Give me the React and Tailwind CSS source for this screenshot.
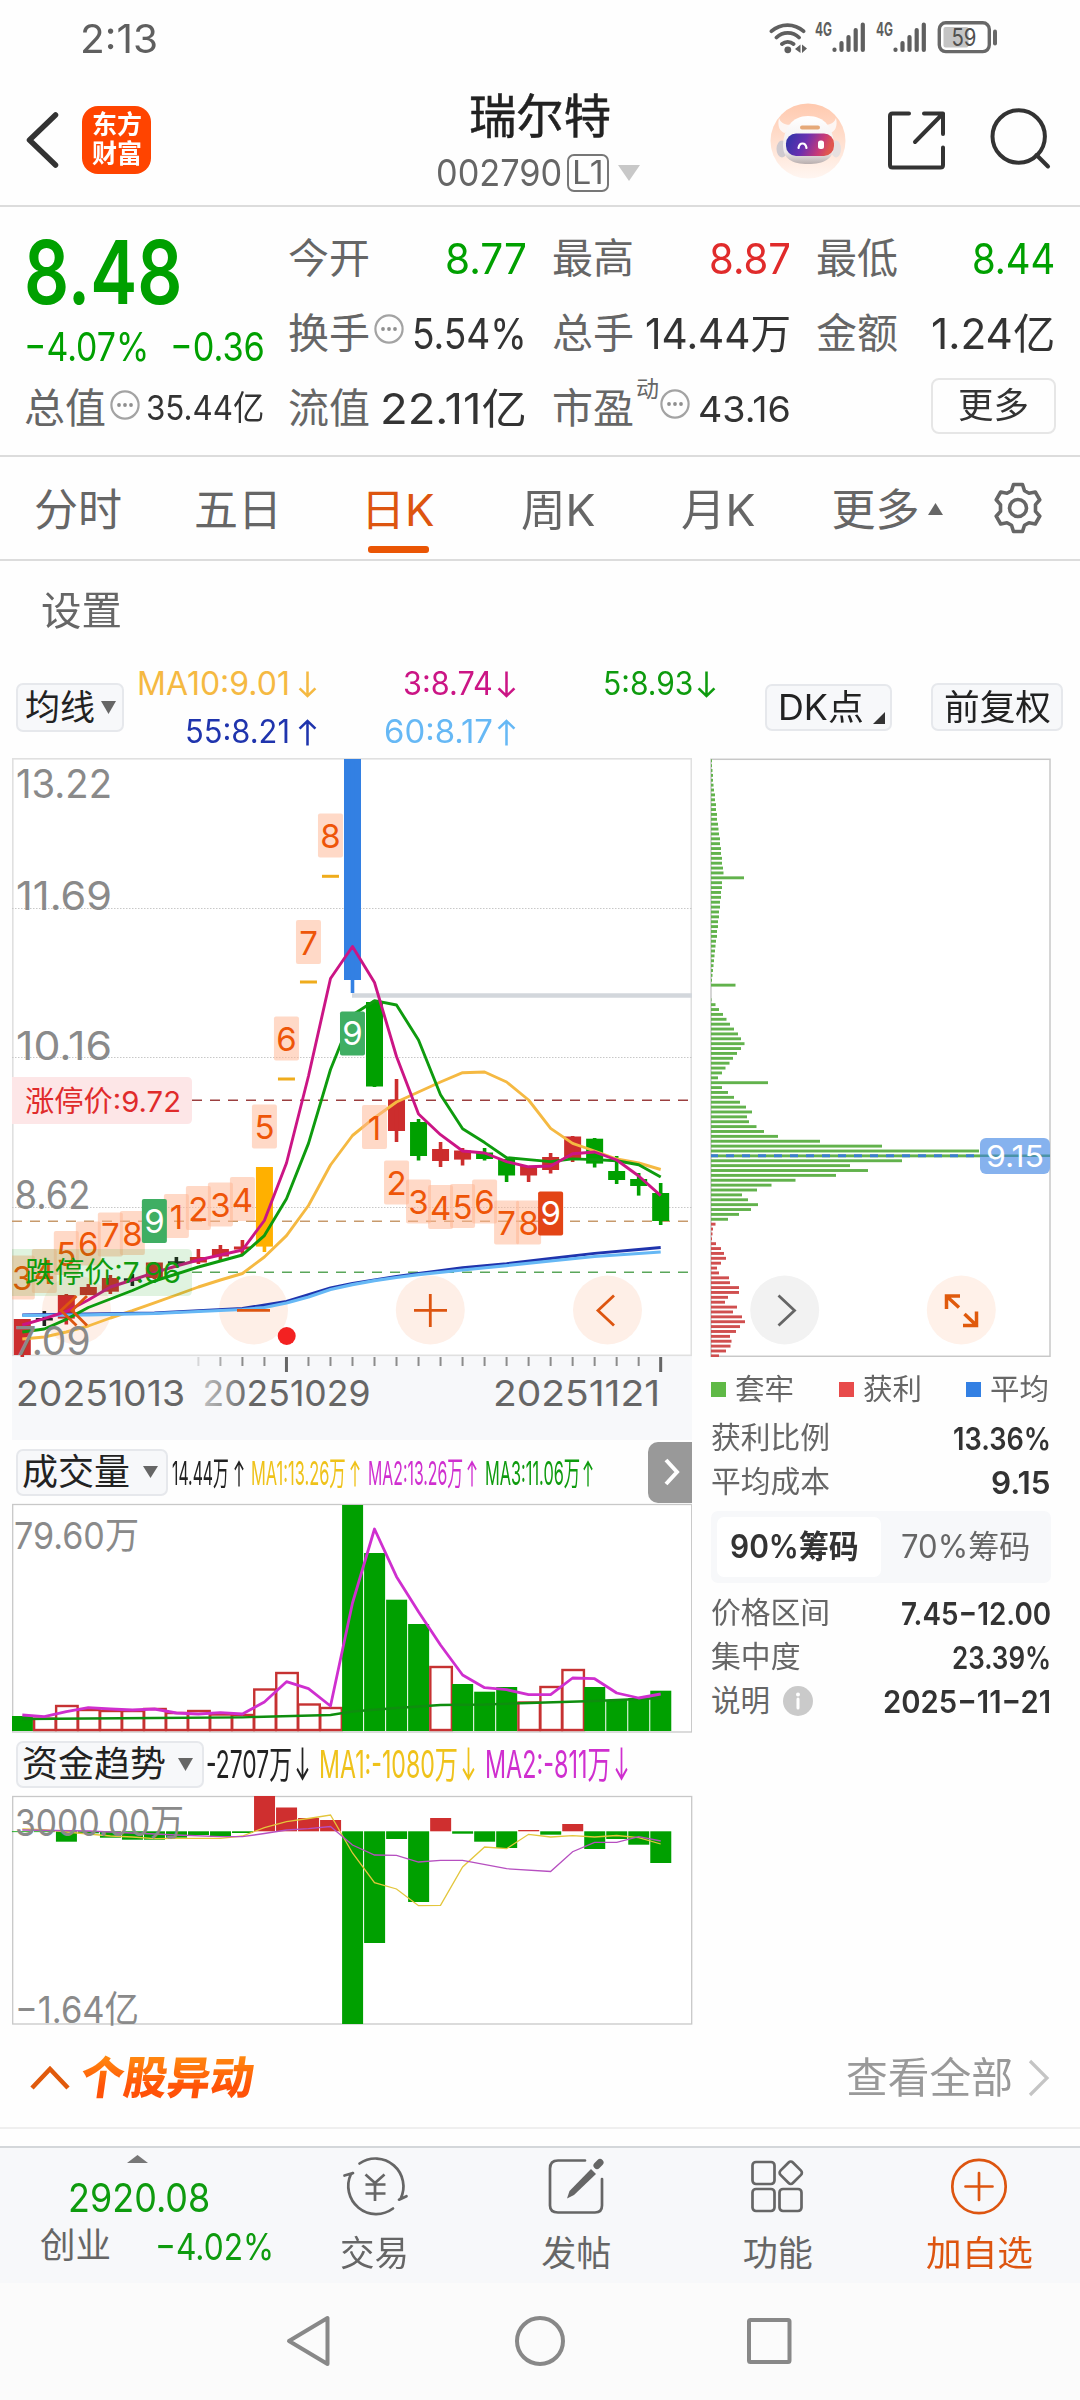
import React, { useLayoutEffect, useRef } from "react";

const FONT = '"Inter", "Noto Sans CJK SC", sans-serif';
const PEACH = "#ffb48f";

/* Single line of text squeezed or stretched to the width of its box. */
function Fit({ children, className = "", inkClass = "" }) {
  const outer = useRef(null);
  const inner = useRef(null);
  useLayoutEffect(() => {
    const o = outer.current;
    const i = inner.current;
    i.style.transform = "none";
    i.style.transform = `scaleX(${o.clientWidth / i.offsetWidth})`;
  });
  return (
    <span ref={outer} className={`block shrink-0 whitespace-nowrap leading-none ${className}`}>
      <span ref={inner} className={`inline-block origin-left ${inkClass}`}>{children}</span>
    </span>
  );
}

/* Text inside a chart. */
function Label({ x, y, w, size, fill = "#8a8a8a", children, weight = 400 }) {
  return (
    <text x={x} y={y} textLength={w} lengthAdjust="spacingAndGlyphs" fontFamily={FONT} fontSize={size} fontWeight={weight} fill={fill}>
      {children}
    </text>
  );
}

function Arrow({ up = false, className = "" }) {
  return (
    <svg viewBox="0 0 18 28" preserveAspectRatio="none" className={`shrink-0 ${className}`} fill="none" stroke="currentColor" strokeWidth="2.4">
      {up ? <path d="M9 27.5V2M1.5 10L9 2l7.5 8" /> : <path d="M9 .5V26M1.5 18L9 26l7.5-8" />}
    </svg>
  );
}

function Tri({ up = false, className = "" }) {
  return (
    <svg viewBox="0 0 10 10" preserveAspectRatio="none" className={`shrink-0 ${className}`} fill="currentColor">
      <path d={up ? "M0 10L5 0l5 10z" : "M0 0L5 10l5-10z"} />
    </svg>
  );
}

function Dots({ className = "" }) {
  return (
    <svg viewBox="0 0 32 32" className={`h-[32px] w-[32px] shrink-0 ${className}`} fill="none" stroke="#a3a3a3" strokeWidth="2.2">
      <circle cx="16" cy="16" r="13.6" />
      <g fill="#8f8f8f" stroke="none"><circle cx="10" cy="16" r="1.9" /><circle cx="16" cy="16" r="1.9" /><circle cx="22" cy="16" r="1.9" /></g>
    </svg>
  );
}

function Signal({ className = "" }) {
  return (
    <svg viewBox="0 0 52 34" className={`h-[34px] w-[52px] shrink-0 overflow-visible ${className}`}>
      <text x="0" y="14.5" textLength="17" lengthAdjust="spacingAndGlyphs" fontFamily={FONT} fontSize="18.5" fontWeight="700" fill="#5f5f5f">4G</text>
      <g stroke="#5f5f5f" strokeWidth="4.2" strokeLinecap="round">
        <path d="M19.5 28.5v.4M26.5 22v7M33.5 16v13M40.700 9v20M47.800 3.500v25.500" />
      </g>
    </svg>
  );
}

function StatusBar() {
  return (
    <div className="flex h-[76px] items-center pl-[80px] text-[#5f5f5f]">
      <Fit className="w-[78px] text-[39px]">2:13</Fit>
      <svg viewBox="0 0 40 34" className="ml-[611px] h-[34px] w-[40px] shrink-0" fill="none" stroke="#5f5f5f" strokeWidth="3.800" strokeLinecap="round">
        <path d="M2.500 10.200a24 24 0 0 1 32 0M7.500 16.500a16 16 0 0 1 22.500 0M13 23a8.800 8.800 0 0 1 11.500 0" />
        <g fill="#5f5f5f" stroke="none"><circle cx="18.800" cy="28.800" r="3.400" /><path d="M26 28l5.500-4.500v8.500zM33 23.500v8.500l5-4.500z" /></g>
      </svg>
      <Signal className="ml-[6px]" />
      <Signal className="ml-[9px]" />
      <svg viewBox="0 0 62 34" className="ml-[8px] h-[34px] w-[62px] shrink-0">
        <rect x="3.300" y="1.800" width="50" height="28.800" rx="6.500" fill="#fff" stroke="#686868" strokeWidth="3.400" />
        <rect x="7.500" y="6" width="25" height="20.500" rx="2" fill="#c4c4c4" />
        <path d="M59 10.500v12" stroke="#686868" strokeWidth="4" strokeLinecap="round" />
        <text x="15.500" y="25" textLength="25" lengthAdjust="spacingAndGlyphs" fontFamily={FONT} fontSize="24" fill="#505050">59</text>
      </svg>
    </div>
  );
}

function Robot() {
  return (
    <svg viewBox="0 0 76 76" className="h-[76px] w-[76px] shrink-0">
      <defs>
        <linearGradient id="halo" x1="0" y1="0" x2="0" y2="1"><stop offset="0" stopColor="#ffc9ae" /><stop offset="1" stopColor="#fff6f1" /></linearGradient>
        <linearGradient id="visor" x1="0" y1="0" x2="1" y2=".2"><stop offset="0" stopColor="#2a35a8" /><stop offset=".45" stopColor="#6a2fb0" /><stop offset=".8" stopColor="#c73a78" /><stop offset="1" stopColor="#e0574f" /></linearGradient>
        <linearGradient id="shell" x1="0" y1="0" x2="0" y2="1"><stop offset="0" stopColor="#fff" /><stop offset=".75" stopColor="#efeaea" /><stop offset="1" stopColor="#b9aeae" /></linearGradient>
      </defs>
      <circle cx="38" cy="38" r="37.500" fill="url(#halo)" />
      <path d="M9 15c-2 8 1 14 6 15l9-9c-7 2-13 0-15-6zM66 15c2 8-1 14-6 15l-9-9c7 2 13 0 15-6z" fill="#fdf6f3" />
      <ellipse cx="12" cy="46" rx="5.500" ry="8.500" fill="#cfcacf" />
      <ellipse cx="66" cy="46" rx="5" ry="8.500" fill="#e6e0e0" />
      <path d="M38 13c17 0 25 12 26 29 0 14-10 19-26 19s-25-5-25-19c1-17 9-29 25-29z" fill="url(#shell)" />
      <rect x="30" y="22.500" width="20" height="4" rx="2" fill="#e5a878" />
      <rect x="16" y="30.500" width="48" height="22.500" rx="10" fill="url(#visor)" />
      <path d="M28.500 45c1-6 7-6 8 0" fill="none" stroke="#fff" strokeWidth="2.200" strokeLinecap="round" />
      <rect x="48" y="37.500" width="6" height="8.500" rx="2.500" fill="#fff" />
    </svg>
  );
}

function Header() {
  return (
    <div className="flex h-[131px] items-center border-b-2 border-[#dcdcdc]">
      <div className="flex w-[400px] items-center pl-[24px]">
        <svg viewBox="0 0 38 58" className="mb-[2px] h-[58px] w-[38px]" fill="none" stroke="#333" strokeWidth="5.500" strokeLinecap="round" strokeLinejoin="round"><path d="M31.500 4L5.500 29l26 25" /></svg>
        <div className="mb-[2px] ml-[20px] flex h-[68px] w-[69px] flex-col items-center justify-center rounded-[16px] bg-[#ff4400] font-bold text-white">
          <div className="flex h-[29px] items-center"><Fit className="w-[50px] text-[26px]">东方</Fit></div>
          <div className="flex h-[29px] items-center"><Fit className="w-[50px] text-[26px]">财富</Fit></div>
        </div>
      </div>
      <div className="flex w-[280px] flex-col items-center pt-[4px]">
        <Fit className="w-[142px] text-[47px] text-[#222] [-webkit-text-stroke:0.5px_#222]">瑞尔特</Fit>
        <div className="mt-[14px] flex h-[40px] items-center pr-[4px]">
          <Fit className="w-[126px] text-[36.5px] text-[#666]">002790</Fit>
          <div className="ml-[5px] flex h-[38px] w-[42px] items-center justify-center rounded-[7px] border-2 border-[#777] text-[#666]">
            <Fit className="w-[32px] text-[32px]">L1</Fit>
          </div>
          <Tri className="ml-[9px] h-[16px] w-[22px] text-[#c8c8c8]" />
        </div>
      </div>
      <div className="flex w-[400px] items-center pl-[90px]">
        <Robot />
        <svg viewBox="0 0 62 62" className="mb-[2px] ml-[40px] h-[62px] w-[62px]" fill="none" stroke="#333" strokeWidth="4" strokeLinecap="round" strokeLinejoin="round">
          <path d="M23 4.500H6.500Q4 4.500 4 7v49q0 2.500 2.500 2.500h48Q57 58.500 57 56V38.500M38 4.500h19V25M57 4.500L29 33" />
        </svg>
        <svg viewBox="0 0 62 62" className="mb-[3px] ml-[41px] h-[62px] w-[62px]" fill="none" stroke="#333" strokeWidth="4" strokeLinecap="round">
          <circle cx="29.700" cy="28.500" r="26.200" /><path d="M47.500 47L59 58.500" />
        </svg>
      </div>
    </div>
  );
}

function Stat({ label, lw = "w-[82px]", mark, children }) {
  return (
    <div className="flex h-[75px] w-[239px] items-center text-[#666]">
      <Fit className={`text-[41px] ${lw}`}>{label}</Fit>
      {mark}
      <div className="flex flex-1 justify-end text-[#333]">{children}</div>
    </div>
  );
}

function Quote() {
  return (
    <div className="flex h-[250px] border-b-2 border-[#dcdcdc]">
      <div className="w-[288px] pl-[24px] pt-[33px] text-[#00a000]">
        <div className="flex h-[64px] items-center"><Fit className="w-[158px] text-[88px] font-semibold">8.48</Fit></div>
        <div className="mt-[24px] flex h-[37px] items-center">
          <Fit className="w-[125px] text-[39px]">−4.07%</Fit>
          <Fit className="ml-[21px] w-[95px] text-[39px]">−0.36</Fit>
        </div>
        <div className="mt-[23px] flex h-[40px] items-center text-[#666]">
          <Fit className="w-[82px] text-[41px]">总值</Fit>
          <Dots className="mt-[-7px] ml-[3px]" />
          <Fit className="ml-[5px] w-[118px] text-[34px] text-[#333]">35.44亿</Fit>
        </div>
      </div>
      <div className="grid grid-cols-[240px_240px_240px] content-start gap-x-[24px] pt-[14px]">
        <Stat label="今开"><Fit className="w-[82px] text-[42px] text-[#00a000]">8.77</Fit></Stat>
        <Stat label="最高"><Fit className="w-[82px] text-[42px] text-[#e02b2b]">8.87</Fit></Stat>
        <Stat label="最低"><Fit className="w-[83px] text-[42px] text-[#00a000]">8.44</Fit></Stat>
        <Stat label="换手" mark={<Dots className="mt-[-9px] ml-[3px]" />}><Fit className="w-[115px] text-[42px]">5.54%</Fit></Stat>
        <Stat label="总手"><Fit className="w-[146px] text-[42px]">14.44万</Fit></Stat>
        <Stat label="金额"><Fit className="w-[124px] text-[42px]">1.24亿</Fit></Stat>
        <Stat label="流值"><Fit className="w-[147px] text-[42px]">22.11亿</Fit></Stat>
        <Stat label="市盈" mark={<><Fit className="ml-[2px] mt-[-38px] w-[23px] text-[23px]">动</Fit><Dots className="mt-[-9px]" /></>}><Fit className="w-[93px] text-[36px]">43.16</Fit></Stat>
        <div className="flex h-[75px] items-center justify-end">
          <div className="mb-[6px] flex h-[56px] w-[125px] items-center justify-center rounded-[8px] border-2 border-[#e6e6e6] text-[#333]">
            <Fit className="w-[71px] text-[35px]">更多</Fit>
          </div>
        </div>
      </div>
    </div>
  );
}

function Tab({ children, active }) {
  return (
    <div className={`flex w-[160px] flex-col items-center pt-[31px] ${active ? "text-[#dd5510]" : "text-[#666]"}`}>
      {children}
      {active && <div className="mt-[14px] h-[7px] w-[61px] rounded-[3px] bg-[#ea5504]" />}
    </div>
  );
}

function Tabs() {
  return (
    <div className="flex h-[104px] border-b-2 border-[#dcdcdc]">
      <div className="-ml-[2px] flex">
        <Tab><Fit className="w-[88px] text-[44px]">分时</Fit></Tab>
        <Tab><Fit className="w-[88px] text-[44px]">五日</Fit></Tab>
        <Tab active><Fit className="w-[74px] text-[44px]">日K</Fit></Tab>
        <Tab><Fit className="w-[75px] text-[44px]">周K</Fit></Tab>
        <Tab><Fit className="w-[75px] text-[44px]">月K</Fit></Tab>
      </div>
      <div className="flex w-[178px] justify-center pt-[31px] text-[#666]">
        <Fit className="w-[88px] text-[44px]">更多</Fit>
        <Tri up className="ml-[8px] mt-[15px] h-[12px] w-[15px]" />
      </div>
      <div className="flex w-[84px] justify-center pt-[25px]">
        <svg viewBox="0 0 52 52" className="h-[52px] w-[52px]" fill="none" stroke="#666" strokeWidth="3.600" strokeLinejoin="round">
          <path d="M21.500 2.500h9l2 6.200 4.500 2.600 6.300-1.300 4.500 7.800-4.300 4.800v6.800l4.300 4.800-4.500 7.800-6.300-1.300-4.500 2.600-2 6.200h-9l-2-6.200-4.500-2.600-6.300 1.300-4.500-7.800 4.300-4.800v-6.800l-4.300-4.800L8.700 10l6.300 1.300 4.500-2.600z" />
          <circle cx="26" cy="26" r="8.500" />
        </svg>
      </div>
    </div>
  );
}

function Toolbar() {
  return (
    <div className="flex h-[99px] pl-[16px]">
      <div className="mt-[24px] flex h-[49px] w-[108px] items-center rounded-[7px] border-2 border-[#e6e8ec] bg-[#f7f8fa] pl-[7px] text-[#222]">
        <Fit className="w-[70px] text-[35px]">均线</Fit>
        <Tri className="ml-[6px] h-[13px] w-[15px] text-[#666]" />
      </div>
      <div className="ml-[12px] w-[580px]">
        <div className="mt-px flex h-[48px] items-center">
          <Fit className="ml-[1px] w-[153px] text-[32px] text-[#f5b942]">MA10:9.01</Fit>
          <Arrow className="ml-[8px] h-[27px] w-[19px] text-[#f5b942]" />
          <Fit className="ml-[86px] w-[90px] text-[32px] text-[#cb1585]">3:8.74</Fit>
          <Arrow className="ml-[4px] h-[27px] w-[19px] text-[#cb1585]" />
          <Fit className="ml-[87px] w-[90px] text-[32px] text-[#0e9b0e]">5:8.93</Fit>
          <Arrow className="ml-[4px] h-[27px] w-[19px] text-[#0e9b0e]" />
        </div>
        <div className="flex h-[48px] items-center">
          <Fit className="ml-[49px] w-[105px] text-[32px] text-[#1f34ad]">55:8.21</Fit>
          <Arrow up className="ml-[8px] h-[27px] w-[19px] text-[#1f34ad]" />
          <Fit className="ml-[67px] w-[109px] text-[32px] text-[#66b8f5]">60:8.17</Fit>
          <Arrow up className="ml-[4px] h-[27px] w-[19px] text-[#66b8f5]" />
        </div>
      </div>
      <div className="ml-[49px] mt-[25px] flex h-[47px] w-[127px] items-center rounded-[7px] border-2 border-[#e6e8ec] bg-[#f7f8fa] pl-[11px] text-[#222]">
        <Fit className="w-[86px] text-[35px]">DK点</Fit>
        <svg viewBox="0 0 12 12" className="ml-[9px] mt-[20px] h-[12px] w-[12px]" fill="#333"><path d="M12 0v12H0z" /></svg>
      </div>
      <div className="ml-[39px] mt-[24px] flex h-[48px] w-[132px] items-center justify-center rounded-[7px] border-2 border-[#e6e8ec] bg-[#f7f8fa] text-[#222]">
        <Fit className="w-[107px] text-[35px]">前复权</Fit>
      </div>
    </div>
  );
}

const cx = (i) => 22.3 + i * 22.013;
const poly = (arr) => arr.map((y, i) => `${cx(i).toFixed(1)},${y}`).join(" ");
/* Polyline through sparse [index, y] pairs. */
const sparse = (arr) => arr.map(([i, y]) => `${cx(i).toFixed(1)},${y}`).join(" ");

const RED = "#cc2d2d";
const GREEN = "#00a000";
/* index, colour, body top, body bottom, wick top, wick bottom */
const CANDLES = [
  [0, RED, 1319, 1355, 1319, 1357], [1, "#222", 1318, 1320.5, 1311, 1326], [2, RED, 1295, 1318.6, 1294, 1324.5],
  [3, RED, 1287, 1295, 1284, 1295], [4, RED, 1278, 1291.7, 1275, 1294], [5, "#222", 1278.3, 1280.8, 1274, 1286],
  [6, RED, 1262.5, 1278, 1262, 1279], [7, "#222", 1261.3, 1263.800, 1257, 1268], [8, RED, 1257, 1262.5, 1249, 1264],
  [9, RED, 1249, 1256.5, 1245, 1261], [10, RED, 1246.5, 1249.5, 1240, 1254.5], [11, "#ffb000", 1167, 1246.6, 1167, 1252],
  [15, "#3380e3", 759, 980, 759, 993], [16, GREEN, 1002, 1086.5, 1000, 1087], [17, RED, 1099.5, 1131, 1079, 1142],
  [18, GREEN, 1122, 1156, 1119, 1160.5], [19, RED, 1149, 1161, 1142, 1167], [20, RED, 1150.5, 1159.6, 1148, 1165.5],
  [21, GREEN, 1152.500, 1159, 1148, 1160.5], [22, GREEN, 1159, 1175.5, 1159, 1182], [23, RED, 1166, 1175.5, 1166, 1182],
  [24, RED, 1157, 1170, 1153, 1173.5], [25, RED, 1136.5, 1158, 1136, 1162], [26, GREEN, 1138.7, 1163.6, 1138, 1167.5],
  [27, GREEN, 1171, 1180, 1156, 1184], [28, GREEN, 1179, 1186, 1173, 1195.6], [29, GREEN, 1193, 1221, 1183, 1225],
];
const BADGES = [
  [0, 1277.5, 3], [1, 1271, 4], [2, 1253, 5], [3, 1243.5, 6], [4, 1234.5, 7], [5, 1233, 8], [7, 1216, 1], [8, 1208, 2], [9, 1204.5, 3],
  [10, 1199, 4], [11, 1126.5, 5], [12, 1038.5, 6], [13, 942, 7], [14, 835.5, 8],
  [16, 1127, 1], [17, 1182.5, 2], [18, 1201.500, 3], [19, 1207, 4], [20, 1206, 5], [21, 1201.500, 6], [22, 1222.5, 7], [23, 1222.5, 8],
];
const MA3 = [1325, 1318.6, 1311.5, 1300, 1287, 1280, 1272.7, 1266, 1260, 1255, 1250, 1220.5, 1163, 1076, 978.5, 946.500, 982.5, 1056.5, 1114, 1134.7, 1151, 1153, 1161.6, 1166.8, 1166, 1153.7, 1152, 1160, 1176, 1195.6];
const MA5 = [1332, 1329, 1319.4, 1307.5, 1299, 1290.5, 1281, 1274, 1267, 1261, 1255, 1235.6, 1198.8, 1143.4, 1069.5, 1015, 1000.7, 1005, 1040, 1094.8, 1128.8, 1142.6, 1157.7, 1159.6, 1161.6, 1158.9, 1159.6, 1160.8, 1164.8, 1177];
const MA10 = [1339, 1337, 1332, 1326, 1318, 1310.7, 1302.8, 1295, 1287, 1280, 1273.5, 1257, 1235.6, 1205.5, 1165, 1135.5, 1117.7, 1102, 1092, 1082, 1072.7, 1072, 1082, 1100, 1128.4, 1143.4, 1151, 1159, 1163, 1169.5];
const MA60 = [[0, 1315.5], [3, 1314.800], [6, 1313.5], [8, 1311.5], [10, 1309.5], [11, 1307.5], [12, 1303], [13, 1297], [14, 1289.500], [15, 1284.6], [16, 1280.6], [17, 1277.5], [18, 1274.7], [20, 1270], [22, 1265.6], [24, 1261], [26, 1256.5], [28, 1253.500], [29, 1252]];
const MA55 = [[0, 1315], [6, 1313], [10, 1308.500], [12, 1301.5], [14, 1288], [15, 1283.5], [17, 1276.500], [18, 1273.5], [20, 1267.600], [22, 1263.6], [24, 1258.5], [26, 1253.4], [28, 1249.500], [29, 1247.5]];

function CandleChart() {
  return (
    <svg viewBox="12 758 680 682" className="block h-[682px] w-[680px]">
      <rect x="12" y="1356" width="680" height="84" fill="#f7f8fa" />
      <rect x="12.800" y="758.800" width="678.500" height="596.500" fill="#fff" stroke="#e0e0e0" strokeWidth="1.600" />
      <g stroke="#c8c8c8" strokeWidth="1" strokeDasharray="1.500 1.500"><path d="M12 908.500h680M12 1057.500h680M12 1207.500h680" /></g>
      <g fill="#feefe7"><circle cx="76.500" cy="1310" r="34.500" /><circle cx="253.500" cy="1310" r="34.500" /><circle cx="430.300" cy="1310" r="34.500" /><circle cx="607.500" cy="1310" r="34.500" /></g>
      <path d="M192 1100.300H690" stroke="#9b3f3f" strokeWidth="1.500" strokeDasharray="10 8" />
      <path d="M12 1221.300H690" stroke="#c79a6c" strokeWidth="1.500" strokeDasharray="10 8" />
      <path d="M192 1272.300H690" stroke="#5aa65a" strokeWidth="1.500" strokeDasharray="10 8" />
      <path d="M352 995.500H692" stroke="#d3d7dc" strokeWidth="4.600" />
      {CANDLES.map(([i, c, t, b, wt, wb]) => (
        <g key={i} fill={c}>
          <rect x={cx(i) - 8.500} y={t} width="17" height={b - t} />
          <rect x={cx(i) - 1.800} y={wt} width="3.600" height={wb - wt} />
        </g>
      ))}
      <g fill="#efac1c"><rect x={cx(12) - 8.500} y="1077.500" width="17" height="3" /><rect x={cx(13) - 8.500} y="980.500" width="17" height="3" /><rect x={cx(14) - 8.500} y="874.800" width="17" height="3" /></g>
      <g fill="none" strokeWidth="2.900" strokeLinejoin="round">
        <polyline points={poly(MA10)} stroke="#f5b942" />
        <polyline points={sparse(MA55)} stroke="#1f34ad" />
        <polyline points={sparse(MA60)} stroke="#66b8f5" strokeWidth="3.200" />
        <polyline points={poly(MA5)} stroke="#0e9b0e" />
        <polyline points={poly(MA3)} stroke="#cb1585" />
      </g>
      {BADGES.map(([i, y, n]) => (
        <g key={i}>
          <rect x={cx(i) - 12.500} y={y - 22} width="25" height="44" rx="2" fill={PEACH} opacity=".5" />
          <text x={cx(i)} y={y + 12.500} textAnchor="middle" fontFamily={FONT} fontSize="33" fill="#ee5508">{n}</text>
        </g>
      ))}
      {[[6, 1221, "#3fae63"], [15, 1033.5, "#3fae63"], [24, 1213.5, "#e34415"]].map(([i, y, c]) => (
        <g key={i}>
          <rect x={cx(i) - 12.500} y={y - 22} width="25" height="44" rx="2" fill={c} />
          <text x={cx(i)} y={y + 11.500} textAnchor="middle" fontFamily={FONT} fontSize="33" fill="#fff">9</text>
        </g>
      ))}
      <path d="M12 1077h175q5 0 5 5v37q0 5-5 5H12z" fill="#fde6e7" />
      <Label x={25} y={1112} w={156} size={29} fill="#e02b2b">涨停价:9.72</Label>
      <path d="M12 1249h175q5 0 5 5v37q0 5-5 5H12z" fill="#00a000" opacity=".12" />
      <Label x={25} y={1283} w={156} size={29} fill="#0e9b0e">跌停价:7.96</Label>
      <Label x={16} y={798} w={96} size={39}>13.22</Label>
      <Label x={16} y={910} w={96} size={39}>11.69</Label>
      <Label x={16} y={1059.500} w={96} size={39}>10.16</Label>
      <Label x={14.500} y={1209} w={76} size={39}>8.62</Label>
      <Label x={14.500} y={1354.500} w={76} size={39}>7.09</Label>
      <g fill="none" stroke="#dd5510" strokeWidth="2.800">
        <path d="M76.500 1296L61 1310.500l15.500 15M87 1296l-15 14.500 15 15" />
        <path d="M237 1310.400h33M414 1310.400h33M430.300 1294v33M614 1295.500l-16 15 16 15" />
      </g>
      <circle cx="286.700" cy="1336" r="9" fill="#f32121" />
      {Array.from({ length: 22 }, (_, k) => k + 8).map((i) => {
        const big = i === 12 || i === 29;
        return <rect key={i} x={cx(i) - (big ? 1.500 : 1)} y="1357" width={big ? 3 : 2} height={big ? 15 : 9} fill={big ? "#666" : "#8c8c8c"} opacity={i === 8 ? 0.3 : i === 9 ? 0.7 : 1} />;
      })}
      <defs>
        <linearGradient id="fade" gradientUnits="userSpaceOnUse" x1="200" y1="0" x2="250" y2="0"><stop offset="0" stopColor="#c4c4c4" /><stop offset="1" stopColor="#666" /></linearGradient>
      </defs>
      <Label x={16} y={1406} w={169} size={36} fill="#666">20251013</Label>
      <Label x={202.500} y={1406} w={168} size={36} fill="url(#fade)">20251029</Label>
      <Label x={493} y={1406} w={167} size={36} fill="#666">20251121</Label>
    </svg>
  );
}

const VOL = [1716, 1718.7, 1706, 1710, 1711, 1711, 1709, 1713, 1711, 1714.500, 1715, 1689.5, 1673, 1704.500, 1708, 1505, 1553, 1599.7, 1624, 1667, 1684, 1691.7, 1687, 1702.5, 1687, 1670, 1687, 1700, 1698, 1690.7];
const VOL_UP = new Set([1, 2, 3, 4, 5, 6, 7, 8, 9, 10, 11, 12, 13, 14, 19, 23, 24, 25]);
const VOL_MA = [1715, 1716.7, 1711.7, 1707.7, 1709, 1710, 1709, 1713, 1714, 1712.7, 1714, 1702, 1681.7, 1688.7, 1706, 1603, 1529, 1576.7, 1611.7, 1645, 1675, 1687.7, 1689.7, 1694.7, 1694.7, 1678, 1678.700, 1693, 1698, 1694];

function VolumeChart() {
  return (
    <svg viewBox="12 1503 680 230" className="block h-[230px] w-[680px]">
      <rect x="12.700" y="1504.500" width="679" height="227.500" fill="#fff" stroke="#c8c8c8" strokeWidth="1.300" />
      {VOL.map((y, i) =>
        VOL_UP.has(i) ? (
          <rect key={i} x={cx(i) - 10.200} y={y} width="21.500" height={1730 - y} fill="#fff" stroke="#c63232" strokeWidth="2.400" />
        ) : (
          <rect key={i} x={cx(i) - 10.400} y={y} width="21" height={1731 - y} fill={GREEN} />
        )
      )}
      <polyline points={sparse([[0, 1719], [6, 1718], [10, 1717.3], [14, 1715], [15, 1711.500], [17, 1708], [19, 1705], [21, 1704.500], [23, 1703], [26, 1701], [29, 1698]])} fill="none" stroke="#0e8e0e" strokeWidth="2.300" />
      <polyline points={poly(VOL_MA)} fill="none" stroke="#cf2fcf" strokeWidth="2.800" strokeLinejoin="round" />
      <Label x={14} y={1548.5} w={125} size={37}>79.60万</Label>
    </svg>
  );
}

const FLOW = [1832, 1831.5, 1841.7, 1833.3, 1837.7, 1839.7, 1839.7, 1837.7, 1835, 1836.7, 1833, 1796, 1807.5, 1818, 1820, 2024, 1943, 1839, 1902, 1818, 1833.7, 1841.7, 1848, 1830, 1834.7, 1824, 1849, 1839, 1844.7, 1863];
const FLOW_MA1 = [1829, 1829.7, 1832, 1834, 1836, 1837, 1838.7, 1838.3, 1838.3, 1838.3, 1836, 1827.7, 1821.7, 1818.500, 1815, 1853, 1882.7, 1889, 1905.7, 1905.3, 1867, 1847, 1848.7, 1834.300, 1837, 1835.7, 1837, 1835.5, 1837.7, 1844];
const FLOW_MA2 = [[0, 1830], [3, 1831], [5, 1833], [7, 1835], [9, 1836.7], [10, 1836.7], [11, 1833.5], [12, 1830], [13, 1828.7], [14, 1826.5], [15, 1845], [16, 1855], [17, 1855.3], [18, 1862], [19, 1860.3], [20, 1860.3], [22, 1868.7], [24, 1871.5], [25, 1851.7], [26, 1842.3], [27, 1842.3], [28, 1836.7], [29, 1841]];

function FlowChart() {
  return (
    <svg viewBox="12 1795 680 230" className="block h-[230px] w-[680px] overflow-visible">
      <rect x="12.700" y="1796.500" width="679" height="227.500" fill="#fff" stroke="#c8c8c8" strokeWidth="1.300" />
      {FLOW.map((y, i) => (
        <rect key={i} x={cx(i) - 10.400} y={Math.min(y, 1831.3)} width="21" height={Math.max(Math.abs(y - 1831.3), 0.800)} fill={y < 1831.3 ? "#cf2f2f" : GREEN} />
      ))}
      <polyline points={poly(FLOW_MA1)} fill="none" stroke="#e3c63c" strokeWidth="1.300" />
      <polyline points={sparse(FLOW_MA2)} fill="none" stroke="#b64fc0" strokeWidth="1.300" />
      <Label x={15} y={1836} w={169} size={37}>3000.00万</Label>
      <Label x={15} y={2022.500} w={124} size={37}>−1.64亿</Label>
    </svg>
  );
}

const CHIPS = [
  1, 1, 1.5, 2, 2, 2.5, 3, 4, 4, 5, 5, 6, 6, 7, 7.5, 8, 9, 9, 10, 10, 11, 11, 12, 12.5, 33, 11, 11, 10, 10, 9, 9, 8, 8, 7, 7, 6, 6, 5, 4.5, 4,
  3.5, 3, 2.5, 2, 1.5, 1, 24.5, 0, 0, 0.5, 4.5, 8, 12, 15.5, 19, 23, 27, 30, 33.5, 30, 26, 22, 18.5, 14.5, 11, 7, 57, 11, 17, 23, 29, 35, 41, 36, 38, 45.5, 53, 67, 109,
  171, 268, 339, 191, 139, 157, 125, 84.5, 60.5, 46, 31, 37, 47, 40, 28, 17, 4.5, 2, 1.5, 1, 5, 10, 13, 15, 10, 6, 8, 18, 19, 28, 28, 17, 14, 26, 22, 31, 34, 29, 25, 19, 20.5, 19.5, 15, 8,
];

function ChipChart() {
  return (
    <svg viewBox="710 758 342 599" className="block h-[599px] w-[342px]">
      <rect x="711" y="759.300" width="339" height="597" fill="#fff" stroke="#c8c8c8" strokeWidth="1.500" />
      {CHIPS.map((w, k) => (
        <rect key={k} x="711" y={759.300 + k * 4.878} width={w} height="2.900" fill={k < 95 ? "#62b24c" : "#d04f4f"} />
      ))}
      <path d="M711 1155.800H980" stroke="#3b7fd0" strokeWidth="3" strokeDasharray="8 8" strokeDashoffset="1" />
      <rect x="980" y="1138" width="70" height="36" rx="6" fill="#86b2ee" />
      <path d="M980 1155.800h70" stroke="#4a93a8" strokeWidth="2.400" />
      <Label x={986} y={1167} w={58} size={30} fill="#fff">9.15</Label>
      <circle cx="784.700" cy="1310" r="34.500" fill="#f2f2f2" />
      <path d="M778.500 1295.500l16 15-16 15" fill="none" stroke="#666" strokeWidth="2.800" />
      <circle cx="961.300" cy="1310" r="34.500" fill="#fff1e9" />
      <g fill="none" stroke="#e05a0c" strokeWidth="3.500"><path d="M960 1296h-13.500v13M947.500 1297l11.500 10.500M963 1325.500h13.500v-14M975.500 1324.500L964.500 1314" /></g>
    </svg>
  );
}

function Sub({ children, className = "" }) {
  return (
    <div className={`flex h-[47px] shrink-0 items-center rounded-[7px] border-2 border-[#e6e8ec] bg-[#f7f8fa] pl-[4px] text-[#222] ${className}`}>
      {children}
    </div>
  );
}

function Row({ label, value, lw, vw, extra }) {
  return (
    <div className="flex h-[44px] items-center">
      <Fit className={`text-[29.5px] text-[#666] ${lw}`}>{label}</Fit>
      {extra}
      <Fit className={`ml-auto text-[31px] font-semibold text-[#333] ${vw}`}>{value}</Fit>
    </div>
  );
}

function ChipPanel() {
  return (
    <div className="ml-[18px] w-[342px]">
      <ChipChart />
      <div className="ml-px w-[340px]">
        <div className="flex h-[59px] items-center pt-[5px] text-[29px] text-[#666]">
          <div className="h-[15px] w-[15px] bg-[#5fb946]" /><Fit className="ml-[9px] w-[59px]">套牢</Fit>
          <div className="ml-[45px] h-[15px] w-[15px] bg-[#e84b4b]" /><Fit className="ml-[9px] w-[59px]">获利</Fit>
          <div className="ml-[44px] h-[15px] w-[15px] bg-[#3380e3]" /><Fit className="ml-[9px] w-[59px]">平均</Fit>
        </div>
        <Row label="获利比例" value="13.36%" lw="w-[119px]" vw="w-[98px]" />
        <Row label="平均成本" value="9.15" lw="w-[119px]" vw="w-[60px]" />
        <div className="mb-[8px] mt-[7px] flex h-[72px] items-center rounded-[7px] bg-[#f7f8fa] pl-[6px]">
          <div className="flex h-[60px] w-[164px] items-center rounded-[7px] bg-white pl-[13px]">
            <Fit className="w-[129px] text-[32px] font-semibold text-[#333]">90%筹码</Fit>
          </div>
          <Fit className="ml-[20px] w-[129px] text-[32px] text-[#666]">70%筹码</Fit>
        </div>
        <Row label="价格区间" value="7.45−12.00" lw="w-[119px]" vw="w-[150px]" />
        <Row label="集中度" value="23.39%" lw="w-[90px]" vw="w-[99px]" />
        <Row
          label="说明" value="2025−11−21" lw="w-[59px]" vw="w-[168px]"
          extra={
            <svg viewBox="0 0 30 30" className="ml-[13px] h-[30px] w-[30px]"><circle cx="15" cy="15" r="15" fill="#cacaca" /><circle cx="15" cy="8.500" r="2" fill="#fff" /><path d="M15 13v9" stroke="#fff" strokeWidth="3" strokeLinecap="round" /></svg>
          }
        />
      </div>
    </div>
  );
}

function Charts() {
  return (
    <div className="flex">
      <div className="w-[692px] pl-[12px]">
        <CandleChart />
        <div className="flex h-[63px] items-center pl-[4px] pt-px">
          <Sub className="w-[152px]">
            <Fit className="w-[108px] text-[36px]">成交量</Fit>
            <Tri className="ml-[13px] h-[12px] w-[15px] text-[#666]" />
          </Sub>
          <div className="ml-[4px] flex items-center pt-[2px] text-[33px]">
            <Fit className="w-[57px] text-[#222]">14.44万</Fit><Arrow up className="ml-[5px] h-[27px] w-[10px] text-[#222]" />
            <Fit className="ml-[7px] w-[95px] text-[#efc21a]">MA1:13.26万</Fit><Arrow up className="ml-[4px] h-[27px] w-[10px] text-[#efc21a]" />
            <Fit className="ml-[8px] w-[95px] text-[#cf2fcf]">MA2:13.26万</Fit><Arrow up className="ml-[4px] h-[27px] w-[10px] text-[#cf2fcf]" />
            <Fit className="ml-[8px] w-[95px] text-[#0e9b0e]">MA3:11.06万</Fit><Arrow up className="ml-[3px] h-[27px] w-[10px] text-[#0e9b0e]" />
          </div>
          <div className="ml-auto flex h-[61px] w-[44px] items-center justify-center rounded-l-[10px] bg-[#999]">
            <svg viewBox="0 0 18 28" className="ml-[4px] h-[28px] w-[18px]" fill="none" stroke="#fff" strokeWidth="4"><path d="M3 2l11 12L3 26" /></svg>
          </div>
        </div>
        <VolumeChart />
        <div className="flex h-[62px] items-center pl-[4px]">
          <Sub className="w-[188px]">
            <Fit className="w-[144px] text-[36px]">资金趋势</Fit>
            <Tri className="ml-[12px] h-[13px] w-[15px] text-[#666]" />
          </Sub>
          <Fit className="ml-[2px] w-[86px] text-[38px] text-[#222]">-2707万</Fit><Arrow className="ml-[4px] h-[34px] w-[13px] text-[#222]" />
          <Fit className="ml-[10px] w-[139px] text-[38px] text-[#efc21a]">MA1:-1080万</Fit><Arrow className="ml-[4px] h-[34px] w-[13px] text-[#efc21a]" />
          <Fit className="ml-[10px] w-[126px] text-[38px] text-[#cf2fcf]">MA2:-811万</Fit><Arrow className="ml-[4px] h-[34px] w-[13px] text-[#cf2fcf]" />
        </div>
        <FlowChart />
      </div>
      <ChipPanel />
    </div>
  );
}

function Movers() {
  return (
    <div className="flex h-[104px] items-center border-b-2 border-[#efefef] pl-[29px] pt-[3px]">
      <svg viewBox="0 0 42 26" className="h-[26px] w-[42px]" fill="none" stroke="#e05a0c" strokeWidth="4.500"><path d="M3 23L21 4l18 19" /></svg>
      <div className="ml-[10px] -skew-x-8">
        <Fit className="w-[173px] text-[45px] font-black" inkClass="bg-linear-to-b from-[#ff8a10] to-[#ff5208] to-70% bg-clip-text text-transparent">个股异动</Fit>
      </div>
      <Fit className="ml-[592px] w-[167px] text-[42px] text-[#999]">查看全部</Fit>
      <svg viewBox="0 0 24 38" className="ml-[14px] h-[38px] w-[24px]" fill="none" stroke="#c4c4c4" strokeWidth="3.200"><path d="M3 2l17 17L3 36" /></svg>
    </div>
  );
}

function Action({ icon, label, w, active }) {
  return (
    <div className={`flex w-[201.5px] flex-col items-center ${active ? "text-[#dd5510]" : "text-[#666]"}`}>
      <svg viewBox="0 0 70 70" className="mt-[3px] h-[70px] w-[70px]" fill="none" stroke="currentColor" strokeWidth="2.700" strokeLinecap="round" strokeLinejoin="round">{icon}</svg>
      <Fit className={`mt-[15px] text-[35px] ${w}`}>{label}</Fit>
    </div>
  );
}

function BottomBar() {
  return (
    <div className="flex h-[137px] border-t-2 border-[#d4d7da] bg-[#f7f8fa]">
      <div className="flex w-[274px] flex-col items-center">
        <Tri up className="mt-[7px] h-[8px] w-[21px] text-[#777]" />
        <Fit className="ml-[3px] mt-[15px] w-[142px] text-[40px] text-[#0e9b0e]">2920.08</Fit>
        <div className="mt-[10px] flex h-[36px] w-full items-center pl-[40px]">
          <Fit className="w-[71px] text-[35.5px] text-[#666]">创业</Fit>
          <Fit className="ml-[44px] w-[119px] text-[37px] text-[#0e9b0e]">−4.02%</Fit>
        </div>
      </div>
      <Action w="w-[69px]" label="交易" icon={<><path d="M19.500 12.500a28 28 0 0 1 41 35.500l-1.500.7 7.500-3.500M53 57.500a28 28 0 0 1-42-34.500l2-1-8.500 2.500" /><path d="M25.500 23.500L35 32l9.500-8.500M25.500 33.500h20M25.500 42.500h20M35 32v18" strokeLinecap="butt" /></>} />
      <Action w="w-[70px]" label="发帖" icon={<><path d="M44 9.500H17q-8 0-8 8v37q0 7 8 7h37q7 0 7-7V28" /><path d="M56 14.500l3-3" strokeWidth="7" /><path d="M50 18l5 5-22 21-7 3.500 2.500-7.500z" fill="currentColor" stroke="none" /></>} />
      <Action w="w-[70px]" label="功能" icon={<><rect x="9.500" y="11" width="22" height="22" rx="3.500" /><rect x="9.500" y="38" width="22" height="22" rx="3.500" /><rect x="36.500" y="38" width="22" height="22" rx="3.500" /><rect x="39" y="13" width="17.500" height="17.500" rx="3" transform="rotate(45 47.750 21.750)" /></>} />
      <Action active w="w-[107px]" label="加自选" icon={<><circle cx="35" cy="35.500" r="26.700" /><path d="M35 22v27M21.500 35.500h27" /></>} />
    </div>
  );
}

function SystemNav() {
  return (
    <div className="flex h-[117px] items-center bg-[#fbfbfb] pb-[2px] pl-[284px]">
      <svg viewBox="0 0 50 54" className="h-[54px] w-[50px]" fill="none" stroke="#888" strokeWidth="4" strokeLinejoin="round"><path d="M43.500 4v46L5 27z" /></svg>
      <svg viewBox="0 0 54 54" className="ml-[179px] h-[54px] w-[54px]" fill="none" stroke="#888" strokeWidth="4"><circle cx="27" cy="27" r="23" /></svg>
      <svg viewBox="0 0 50 50" className="ml-[177px] h-[50px] w-[50px]" fill="none" stroke="#888" strokeWidth="4"><rect x="5" y="4" width="40.500" height="42" rx="1.500" /></svg>
    </div>
  );
}

export default function App() {
  return (
    <div className="h-[2400px] w-[1080px] overflow-hidden bg-[#fefefe] font-['Inter','Noto_Sans_CJK_SC',sans-serif]">
      <StatusBar />
      <Header />
      <Quote />
      <Tabs />
      <div className="flex h-[98px] items-center pl-[41px] pt-px"><Fit className="w-[81px] text-[40px] text-[#666]">设置</Fit></div>
      <Toolbar />
      <Charts />
      <Movers />
      <div className="h-[17px]" />
      <BottomBar />
      <SystemNav />
    </div>
  );
}
